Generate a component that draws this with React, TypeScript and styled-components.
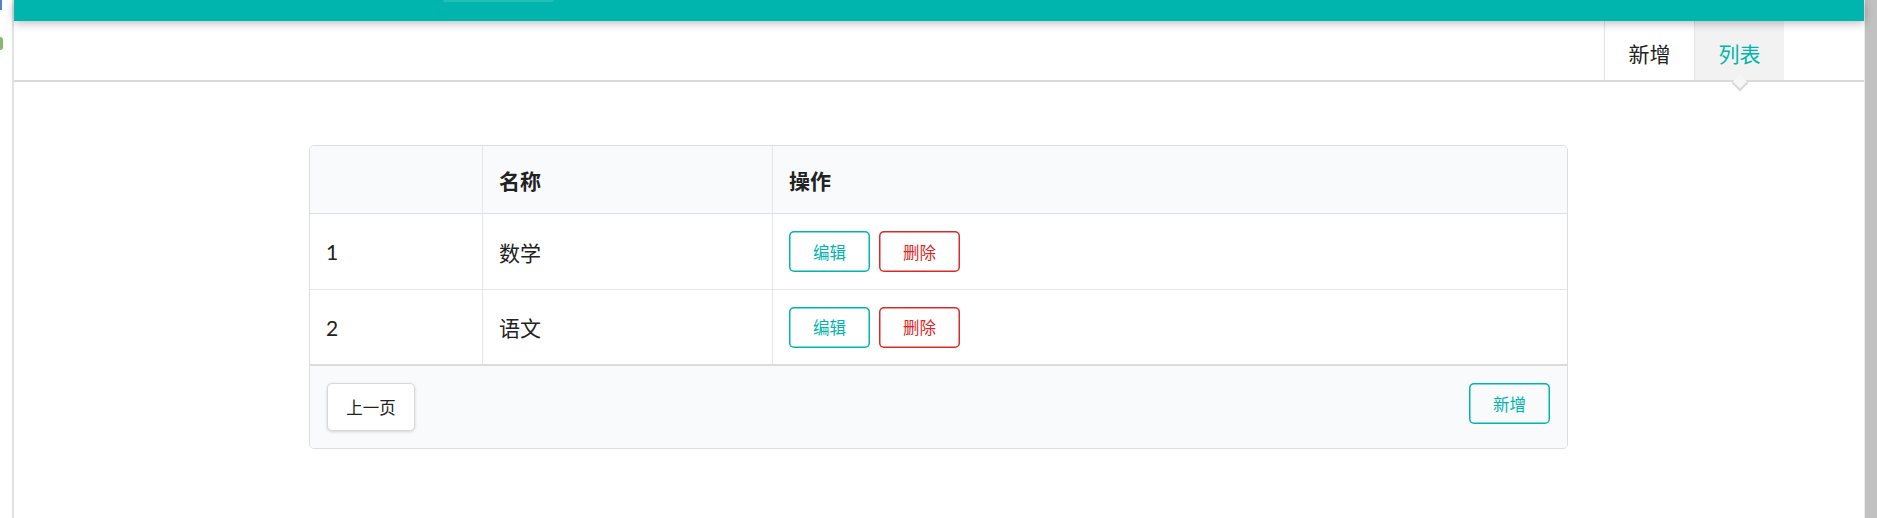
import React from "react";
import styled, { createGlobalStyle } from "styled-components";

const TEAL = "#00b5ad";
const RED = "#db2828";

const GlobalStyle = createGlobalStyle`
  html, body {
    margin: 0;
    padding: 0;
    background: #ffffff;
    overflow: hidden;
  }
  body {
    font-family: Lato, "Noto Sans CJK SC", "Noto Sans", sans-serif;
    color: #222222;
  }
  * { box-sizing: border-box; }
`;

const Page = styled.div`
  display: flex;
  height: 518px;
  width: 1877px;
`;

const Rail = styled.div`
  width: 14px;
  flex: none;
  border-right: 2px solid #e2e2e2;
  display: flex;
  flex-direction: column;
  align-items: flex-start;
`;

const BlueMark = styled.div`
  width: 2px;
  height: 10px;
  background: #4a86c8;
`;

const GreenMark = styled.div`
  margin-top: 27px;
  width: 3px;
  height: 13px;
  border-radius: 0 7px 7px 0;
  background: #86b96a;
`;

const Main = styled.div`
  flex: 1;
  min-width: 0;
  display: flex;
  flex-direction: column;
`;

const TopBar = styled.div`
  height: 21px;
  background: ${TEAL};
  position: relative;
  z-index: 2;
  box-shadow: 0 2px 10px rgba(0, 0, 0, 0.28);
  display: flex;
  align-items: flex-start;
`;

const TopBarBox = styled.div`
  margin-left: 429px;
  width: 111px;
  height: 2px;
  background: #25beb7;
  border-radius: 0 0 3px 3px;
`;

const NavBar = styled.div`
  height: 61px;
  border-bottom: 2px solid #d9d9da;
  display: flex;
  justify-content: flex-end;
  padding-right: 80px;
  background: #ffffff;
`;

const Tab = styled.div<{ $active?: boolean }>`
  position: relative;
  width: 90px;
  height: 59px;
  display: flex;
  align-items: center;
  justify-content: center;
  border-left: 1px solid #e3e3e3;
  font-size: 21px;
  padding-top: 4px;
  color: ${(p) => (p.$active ? TEAL : "#222222")};
  background: ${(p) => (p.$active ? "#f2f2f2" : "transparent")};

  &::after {
    content: "";
    display: ${(p) => (p.$active ? "block" : "none")};
    position: absolute;
    left: 50%;
    top: 100%;
    width: 10px;
    height: 10px;
    background: #f6f6f6;
    border-right: 2px solid #d9d9da;
    border-bottom: 2px solid #d9d9da;
    transform: translate(-50%, -3px) rotate(45deg);
    z-index: 3;
  }
`;

const Content = styled.div`
  padding-top: 63px;
  padding-right: 1px;
  display: flex;
  justify-content: center;
`;

const TableCard = styled.div`
  width: 1259px;
  border: 1px solid #dcdddf;
  border-radius: 5px;
  overflow: hidden;
  background: #ffffff;
`;

const Row = styled.div<{ $head?: boolean; $first?: boolean; $height: number }>`
  display: grid;
  grid-template-columns: 172px 290px 1fr;
  height: ${(p) => p.$height}px;
  background: ${(p) => (p.$head ? "#f9fafb" : "#ffffff")};
  border-top: ${(p) => (p.$head || p.$first ? "none" : "1px solid #e6e6e7")};
  border-bottom: ${(p) => (p.$head ? "1px solid #dedfe0" : "none")};
`;

const Cell = styled.div<{ $head?: boolean; $divider?: boolean }>`
  display: flex;
  align-items: center;
  gap: 9px;
  padding: 0 16px;
  border-left: ${(p) => (p.$divider ? "1px solid #e6e6e7" : "none")};
  font-size: 21px;
  font-weight: ${(p) => (p.$head ? 700 : 400)};
  color: #222222;
`;

const Footer = styled.div`
  height: 84px;
  border-top: 2px solid #dadbdc;
  background: #f9fafb;
  display: flex;
  justify-content: space-between;
  align-items: flex-start;
  padding: 17px 17px 0;
`;

const OutlineButton = styled.button<{ $color: string }>`
  width: 81px;
  height: 41px;
  padding: 0;
  border: none;
  border-radius: 5px;
  background: transparent;
  box-shadow: inset 0 0 0 1.5px ${(p) => p.$color};
  color: ${(p) => p.$color};
  font-family: inherit;
  font-size: 16.5px;
  cursor: pointer;
`;

const PageButton = styled.button`
  width: 88px;
  height: 48px;
  padding: 0;
  border: 1px solid #d8d8d9;
  border-radius: 5px;
  background: #ffffff;
  box-shadow: 0 1px 3px rgba(34, 36, 38, 0.18);
  color: #222222;
  font-family: inherit;
  font-size: 16.5px;
  cursor: pointer;
`;

const Scrollbar = styled.div`
  width: 13px;
  flex: none;
  background: #c1c1c1;
  border-left: 1px solid #ececec;
`;

const rows = [
  { id: 1, name: "数学", height: 75 },
  { id: 2, name: "语文", height: 75 },
];

export default function App() {
  return (
    <>
      <GlobalStyle />
      <Page>
        <Rail>
          <BlueMark />
          <GreenMark />
        </Rail>
        <Main>
          <TopBar>
            <TopBarBox />
          </TopBar>
          <NavBar>
            <Tab>新增</Tab>
            <Tab $active>列表</Tab>
          </NavBar>
          <Content>
            <TableCard>
              <Row $head $height={68}>
                <Cell $head />
                <Cell $head $divider>名称</Cell>
                <Cell $head $divider>操作</Cell>
              </Row>
              {rows.map((r, i) => (
                <Row key={r.id} $first={i === 0} $height={r.height}>
                  <Cell>{r.id}</Cell>
                  <Cell $divider>{r.name}</Cell>
                  <Cell $divider>
                    <OutlineButton $color={TEAL}>编辑</OutlineButton>
                    <OutlineButton $color={RED}>删除</OutlineButton>
                  </Cell>
                </Row>
              ))}
              <Footer>
                <PageButton>上一页</PageButton>
                <OutlineButton $color={TEAL}>新增</OutlineButton>
              </Footer>
            </TableCard>
          </Content>
        </Main>
        <Scrollbar />
      </Page>
    </>
  );
}
